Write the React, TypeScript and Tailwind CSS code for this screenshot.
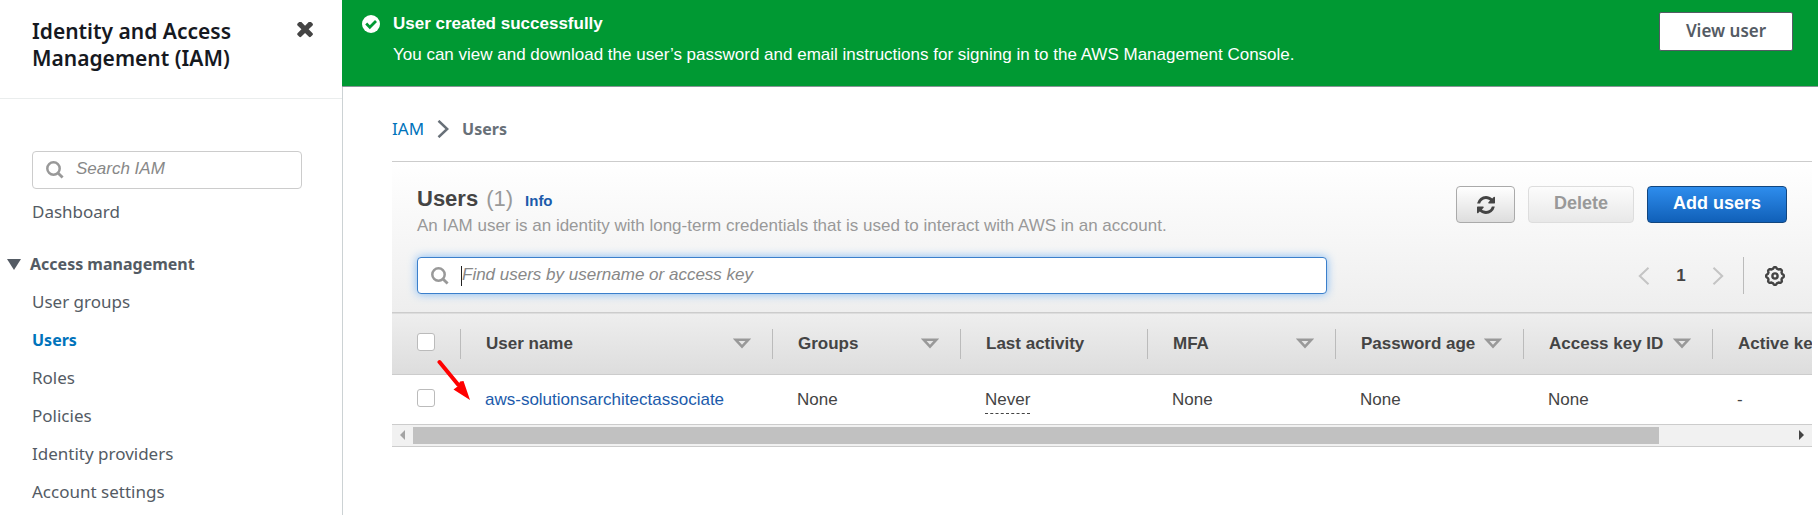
import React from "react";

const SANS = "font-['Liberation_Sans',Arial,sans-serif]";

function CloseIcon() {
  return (
    <svg viewBox="290 420 1204 1184" className="h-4 w-4" fill="#444" aria-hidden="true">
      <path d="M1490 1322q0 40-28 68l-136 136q-28 28-68 28t-68-28l-294-294-294 294q-28 28-68 28t-68-28l-136-136q-28-28-28-68t28-68l294-294-294-294q-28-28-28-68t28-68l136-136q28-28 68-28t68 28l294 294 294-294q28-28 68-28t68 28l136 136q28 28 28 68t-28 68l-294 294 294 294q28 28 28 68z" />
    </svg>
  );
}

function RefreshIcon() {
  return (
    <svg viewBox="128 128 1536 1536" className="h-[18px] w-[18px]" fill="#444" aria-hidden="true">
      <path d="M1639 1056q0 5-1 7-64 268-268 434.5t-478 166.5q-146 0-282.5-55t-243.5-157l-129 129q-19 19-45 19t-45-19-19-45v-448q0-26 19-45t45-19h448q26 0 45 19t19 45-19 45l-137 137q71 66 161 102t187 36q134 0 250-65t186-179q11-17 53-117 8-23 30-23h192q13 0 22.5 9.5t9.5 22.5zm25-800v448q0 26-19 45t-45 19h-448q-26 0-45-19t-19-45 19-45l138-138q-148-137-349-137-134 0-250 65t-186 179q-11 17-53 117-8 23-30 23h-199q-13 0-22.5-9.5t-9.5-22.5v-7q65-268 270-434.5t480-166.5q146 0 284 55.5t245 156.5l130-129q19-19 45-19t45 19 19 45z" />
    </svg>
  );
}

function SearchIcon() {
  return (
    <svg viewBox="0 0 18 18" className="h-[18px] w-[18px]" fill="none" stroke="#999" aria-hidden="true">
      <circle cx="7.5" cy="7.5" r="6.2" strokeWidth="2.5" />
      <path d="M12 12 16.6 16.6" strokeWidth="2.8" />
    </svg>
  );
}

function CheckIcon() {
  return (
    <svg viewBox="0 0 18 18" className="h-[18px] w-[18px]" aria-hidden="true">
      <circle cx="9" cy="9" r="9" fill="#fff" />
      <path d="M4.2 8.6 7.8 12.2 14 6" fill="none" stroke="#093" strokeWidth="2.8" />
    </svg>
  );
}

function Chevron({ left = false, className }: { left?: boolean; className: string }) {
  return (
    <svg viewBox="0 0 12 18" className={"h-[18px] w-3 " + className} fill="none" stroke="currentColor" aria-hidden="true">
      <path d={left ? "M10.5 0.8 1.8 9 10.5 17.2" : "M1.5 0.8 10.2 9 1.5 17.2"} />
    </svg>
  );
}

function GearIcon() {
  const points: string[] = [];
  const steps = 96;
  for (let i = 0; i < steps; i++) {
    const a = (i / steps) * Math.PI * 2;
    const wave = Math.max(-1, Math.min(1, Math.cos(a * 8) * 1.6));
    const r = 8.1 + wave * 0.7;
    points.push(`${(10 + r * Math.cos(a)).toFixed(2)},${(10 + r * Math.sin(a)).toFixed(2)}`);
  }
  return (
    <svg viewBox="0 0 20 20" className="h-5 w-5" fill="none" stroke="#444" aria-hidden="true">
      <polygon points={points.join(" ")} strokeWidth="2.4" strokeLinejoin="round" />
      <circle cx="10" cy="10" r="2.6" strokeWidth="2.4" />
    </svg>
  );
}

function SortIcon() {
  return (
    <svg viewBox="0 0 18 11" className="h-[11px] w-[18px] shrink-0" fill="none" stroke="#999" strokeWidth="2.5" aria-hidden="true">
      <path d="M2.6 1.7h12.8L9 8.7z" />
    </svg>
  );
}

function Checkbox({ label }: { label: string }) {
  return (
    <input
      type="checkbox"
      aria-label={label}
      className="block h-[18px] w-[18px] appearance-none rounded-[3px] border border-[#bbb] bg-white"
    />
  );
}

const NAV = ["User groups", "Users", "Roles", "Policies", "Identity providers", "Account settings"];

function Sidebar() {
  return (
    <aside className="w-[342px] shrink-0 font-['Noto_Sans',sans-serif] text-[17px] text-[#545b64]">
      <div className="flex items-start justify-between border-b border-[#eaeded] pt-[18px] pr-[29px] pb-[26px] pl-8">
        <h2 className="w-[220px] text-[21px] leading-[27px] font-semibold text-[#16191f]">
          Identity and Access Management (IAM)
        </h2>
        <button type="button" aria-label="Close navigation" className="mt-1">
          <CloseIcon />
        </button>
      </div>
      <div className="px-8 pt-[52px]">
        <label className="flex h-[38px] w-[270px] items-center gap-3 rounded-[4px] border border-[#ccc] bg-white pl-[13px]">
          <SearchIcon />
          <input
            type="text"
            aria-label="Search IAM"
            placeholder="Search IAM"
            className="min-w-0 flex-1 pb-[2px] font-['Liberation_Sans',Arial,sans-serif] italic outline-none placeholder:text-[#888]"
          />
        </label>
      </div>
      <nav>
        <a href="#dashboard" className="block pl-8 leading-[46px]">
          Dashboard
        </a>
        <button
          type="button"
          className="mt-[10px] flex h-[38px] w-full items-center gap-[9px] pl-[7px] text-base font-bold"
        >
          <svg viewBox="0 0 14 11" className="h-[11px] w-[14px]" fill="#545b64" aria-hidden="true">
            <path d="M0 0h14L7 11z" />
          </svg>
          Access management
        </button>
        <ul className="pl-8 leading-[38px]">
          {NAV.map((item) => (
            <li key={item} className="h-[38px]">
              <a href={"#" + item} className={item === "Users" ? "text-base leading-[38px] font-bold text-[#0073bb]" : ""}>
                {item}
              </a>
            </li>
          ))}
        </ul>
      </nav>
    </aside>
  );
}

function Banner() {
  return (
    <div className="flex items-start border-b border-[#879596] bg-[#093] pt-3 pr-[25px] pb-5 pl-5 text-white">
      <div className="mt-[3px] mr-[13px]">
        <CheckIcon />
      </div>
      <div className="flex-1 text-[17px]">
        <h2 className="leading-6 font-bold">User created successfully</h2>
        <p className="mt-2 leading-[22px]">
          You can view and download the user’s password and email instructions for signing in to the AWS Management
          Console.
        </p>
      </div>
      <button
        type="button"
        className="h-[39px] w-[134px] rounded-[2px] border border-[#545b64] bg-white pb-[2px] font-['Noto_Sans',sans-serif] text-[17px] font-semibold text-[#545b64]"
      >
        View user
      </button>
    </div>
  );
}

type Column = { title: string; sort: boolean; width: string };

const COLUMNS: Column[] = [
  { title: "User name", sort: true, width: "w-[312px]" },
  { title: "Groups", sort: true, width: "w-[188px]" },
  { title: "Last activity", sort: false, width: "w-[187px]" },
  { title: "MFA", sort: true, width: "w-[188px]" },
  { title: "Password age", sort: true, width: "w-[188px]" },
  { title: "Access key ID", sort: true, width: "w-[189px]" },
  { title: "Active key age", sort: true, width: "w-[250px]" },
];

function UsersTable() {
  return (
    <div className="overflow-hidden">
      <table className="w-[1570px] table-fixed text-left text-[17px] text-[#444]">
        <thead>
          <tr className="h-[62px] border-y border-[#ccc] bg-linear-to-b from-[#eee] to-[#ddd]">
            <th className="w-[68px] pb-1 pl-[25px]">
              <Checkbox label="Select all users" />
            </th>
            {COLUMNS.map((c) => (
              <th key={c.title} className={c.width}>
                <div className="flex h-[30px] items-center justify-between border-l border-[#bbb] pr-[21px] pl-[25px] whitespace-nowrap">
                  {c.title}
                  {c.sort && <SortIcon />}
                </div>
              </th>
            ))}
          </tr>
        </thead>
        <tbody>
          <tr className="h-[49px]">
            <td className="pb-[2px] pl-[25px]">
              <Checkbox label="Select aws-solutionsarchitectassociate" />
            </td>
            <td className="pl-[25px]">
              <a href="#user" className="text-[#1c5bab]">
                aws-solutionsarchitectassociate
              </a>
            </td>
            <td className="pl-[25px]">None</td>
            <td className="pl-[25px]">
              <span className="border-b border-dashed border-[#444] pb-1">Never</span>
            </td>
            <td className="pl-[25px]">None</td>
            <td className="pl-[25px]">None</td>
            <td className="pl-[25px]">None</td>
            <td className="pl-[25px]">-</td>
          </tr>
        </tbody>
      </table>
    </div>
  );
}

function ScrollBar() {
  return (
    <div className="flex h-[23px] items-center border-y border-[#ccc] bg-[#f1f1f1]">
      <div className="flex w-[21px] justify-center">
        <svg viewBox="0 0 5 10" className="h-[10px] w-[5px]" fill="#a3a3a3" aria-hidden="true">
          <path d="M5 0v10L0 5z" />
        </svg>
      </div>
      <div className="flex-1">
        <div className="h-[17px] w-[90.4%] bg-[#c1c1c1]" />
      </div>
      <div className="flex w-[21px] justify-center">
        <svg viewBox="0 0 5 10" className="h-[10px] w-[5px]" fill="#444" aria-hidden="true">
          <path d="M0 0v10l5-5z" />
        </svg>
      </div>
    </div>
  );
}

function UsersPanel() {
  return (
    <section className="relative">
      <div className="border-t border-[#ccc] bg-linear-to-b from-white to-[#eee] px-[25px] pt-6 pb-[18px]">
        <div className="flex h-[71px] items-start justify-between">
          <div>
            <h1 className="flex items-baseline text-[22px] leading-[26px] font-bold text-[#444]">
              Users
              <span className="ml-2 font-normal text-[#999]">(1)</span>
              <a href="#info" className="ml-3 text-[15px] text-[#1c5bab]">
                Info
              </a>
            </h1>
            <p className="mt-px text-[17px] leading-[22px] text-[#999]">
              An IAM user is an identity with long-term credentials that is used to interact with AWS in an account.
            </p>
          </div>
          <div className="flex gap-[13px] text-[18px] font-bold">
            <button
              type="button"
              aria-label="Refresh"
              className="flex h-[37px] w-[59px] items-center justify-center rounded-[4px] border border-[#aaa] bg-linear-to-b from-white to-[#ddd]"
            >
              <RefreshIcon />
            </button>
            <button
              type="button"
              disabled
              className="h-[37px] w-[106px] rounded-[4px] border border-[#ddd] bg-linear-to-b from-[#fcfcfc] to-[#e8e8e8] pb-[2px] text-[#999]"
            >
              Delete
            </button>
            <button
              type="button"
              className="h-[37px] w-[140px] rounded-[4px] border border-[#12467f] bg-linear-to-b from-[#2e8ded] to-[#1060b8] pb-[2px] text-white"
            >
              Add users
            </button>
          </div>
        </div>
        <div className="flex h-[37px] items-center">
          <label className="relative flex h-[37px] w-[910px] items-center gap-[11px] rounded-[4px] border border-[#3b7fcb] bg-white pl-[13px] shadow-[0_0_10px_#7db8f5]">
            <SearchIcon />
            <input
              type="text"
              aria-label="Find users"
              placeholder="Find users by username or access key"
              className="min-w-0 flex-1 pb-[2px] pl-[2px] text-[17px] italic outline-none placeholder:text-[#888]"
            />
            <span className="absolute left-[43px] h-5 w-px bg-[#222]" />
          </label>
          <div className="ml-auto flex items-center text-[#444]">
            <button type="button" aria-label="Previous page">
              <Chevron left className="stroke-2 text-[#c4c4c4]" />
            </button>
            <span className="w-[62px] text-center text-[17px] font-bold">1</span>
            <button type="button" aria-label="Next page">
              <Chevron className="stroke-2 text-[#c4c4c4]" />
            </button>
            <span className="mr-[21px] ml-[19px] h-[37px] w-px bg-[#bbb]" />
            <button type="button" aria-label="Preferences" className="mr-[2px]">
              <GearIcon />
            </button>
          </div>
        </div>
      </div>
      <UsersTable />
      <ScrollBar />
      <svg viewBox="0 0 34 42" className="absolute top-[198px] left-[45px] h-[42px] w-[34px]" aria-hidden="true">
        <path d="M2.5 3 21 25.500" stroke="#f00" strokeWidth="4" strokeLinecap="round" />
        <path d="M33 41 16.500 30.500 20.500 27.500 23 22.500 26.500 22z" fill="#f00" />
      </svg>
    </section>
  );
}

export default function App() {
  return (
    <div className="flex min-h-screen bg-white">
      <Sidebar />
      <main className={"flex min-w-0 flex-1 flex-col " + SANS}>
        <Banner />
        <div className="flex-1 border-l border-[#ccd2d4] pr-[6px] pl-[49px]">
          <nav
            aria-label="Breadcrumb"
            className="flex h-[74px] items-center pt-[10px] font-['Noto_Sans',sans-serif] text-[17px]"
          >
            <a href="#iam" className="text-[#0073bb]">
              IAM
            </a>
            <Chevron className="mx-[13px] stroke-[2.5] text-[#687078]" />
            <span className="text-base font-bold text-[#687078]">Users</span>
          </nav>
          <UsersPanel />
        </div>
      </main>
    </div>
  );
}
